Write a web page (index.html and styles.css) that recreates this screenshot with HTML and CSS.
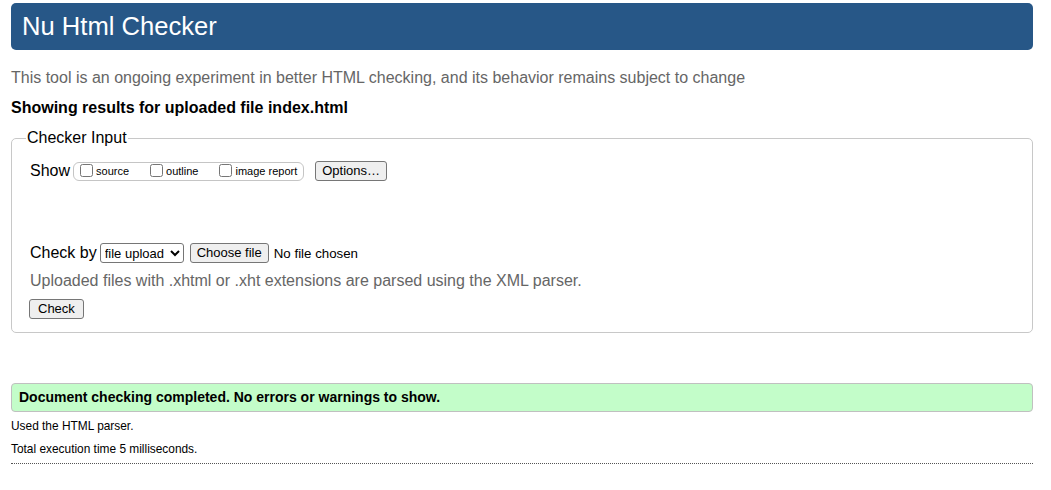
FILE: index.html
```html
<!DOCTYPE html>
<html>
<head>
<meta charset="utf-8">
<title>Nu Html Checker</title>
<link rel="stylesheet" href="styles.css">
</head>
<body>
<h1 class="banner">Nu Html Checker</h1>
<p class="intro">This tool is an ongoing experiment in better HTML checking, and its behavior remains subject to change</p>
<p class="showing">Showing results for uploaded file index.html</p>
<fieldset class="input">
  <legend>Checker Input</legend>
  <div class="row show-row">
    <span class="lbl">Show</span>
    <span class="group">
      <label><input type="checkbox">source</label>
      <label><input type="checkbox">outline</label>
      <label><input type="checkbox">image report</label>
    </span>
    <button class="btn">Options…</button>
  </div>
  <div class="row check-row">
    <span class="lbl">Check by</span>
    <select class="sel"><option>file upload</option></select>
    <button class="btn">Choose file</button>
    <span class="nofile">No file chosen</span>
  </div>
  <p class="hint">Uploaded files with .xhtml or .xht extensions are parsed using the XML parser.</p>
  <button class="btn check">Check</button>
</fieldset>
<p class="success">Document checking completed. No errors or warnings to show.</p>
<p class="meta">Used the HTML parser.</p>
<p class="meta">Total execution time 5 milliseconds.</p>
<hr class="dots">
</body>
</html>
```
FILE: styles.css
```css
html, body {
  background: #fff;
}
body {
  margin: 0;
  padding: 3px 18px 0 11px;
  font-family: "Liberation Sans", Arial, sans-serif;
  font-size: 16px;
  color: #000;
}
.banner {
  margin: 0;
  height: 47px;
  box-sizing: border-box;
  padding: 0 11px;
  background: #275787;
  color: #fff;
  border-radius: 5px;
  font-size: 25.6px;
  font-weight: normal;
  line-height: 47px;
}
.intro {
  margin: 18px 0 0;
  color: #666;
  line-height: 20px;
}
.showing {
  margin: 10px 0 0;
  font-weight: bold;
  line-height: 20px;
}
.input {
  margin: 11px 0 0;
  padding: 14px 18px 13px;
  border: 1px solid #c8c8c8;
  border-radius: 5px;
  min-width: 0;
}
.input legend {
  padding: 0 1px;
  margin-left: -4px;
  font-size: 16px;
  line-height: 18px;
}
.row {
  display: flex;
  align-items: center;
}
.lbl {
  font-size: 16px;
  margin-right: 3px;
}
.group {
  display: inline-flex;
  align-items: center;
  height: 19px;
  box-sizing: border-box;
  border: 1px solid #c5c5c5;
  border-radius: 6px;
  padding: 0 6px 0 4px;
  margin-right: 11px;
  font-size: 11px;
}
.group label {
  display: inline-flex;
  align-items: center;
  margin-right: 19px;
}
.group label:last-child {
  margin-right: 0;
}
.group input {
  margin: 0 3px 0 2px;
  width: 13px;
  height: 13px;
  position: relative;
  top: -1px;
}
.btn {
  font-family: "Liberation Sans", Arial, sans-serif;
  font-size: 13px;
  height: 20px;
  padding: 0 6px;
  border: 1px solid #767676;
  border-radius: 3px;
  background: #efefef;
  color: #000;
  line-height: 18px;
}
.check-row {
  margin-top: 62px;
}
.sel {
  font-family: "Liberation Sans", Arial, sans-serif;
  font-size: 13px;
  height: 20px;
  width: 84px;
  margin-right: 6px;
  border: 1px solid #767676;
  border-radius: 3px;
  background: #fff;
  color: #000;
}
.nofile {
  font-size: 13.3px;
  margin-left: 5px;
}
.hint {
  margin: 8px 0 0;
  color: #666;
  line-height: 20px;
}
.check {
  margin-top: 8px;
  display: block;
  padding: 0 8px;
  margin-left: -1px;
}
.success {
  margin: 50px 0 0;
  height: 29px;
  box-sizing: border-box;
  border: 1px solid #c0c0c0;
  border-radius: 4px;
  background: #c3fdc9;
  padding: 0 7px;
  font-size: 14px;
  font-weight: bold;
  line-height: 27px;
}
.meta {
  margin: 7px 0 0;
  font-size: 11.9px;
  line-height: 15px;
}
.meta + .meta {
  margin-top: 8px;
}
.dots {
  margin: 6px 0 0;
  border: 0;
  border-top: 1px dotted #555;
  height: 0;
}
```
